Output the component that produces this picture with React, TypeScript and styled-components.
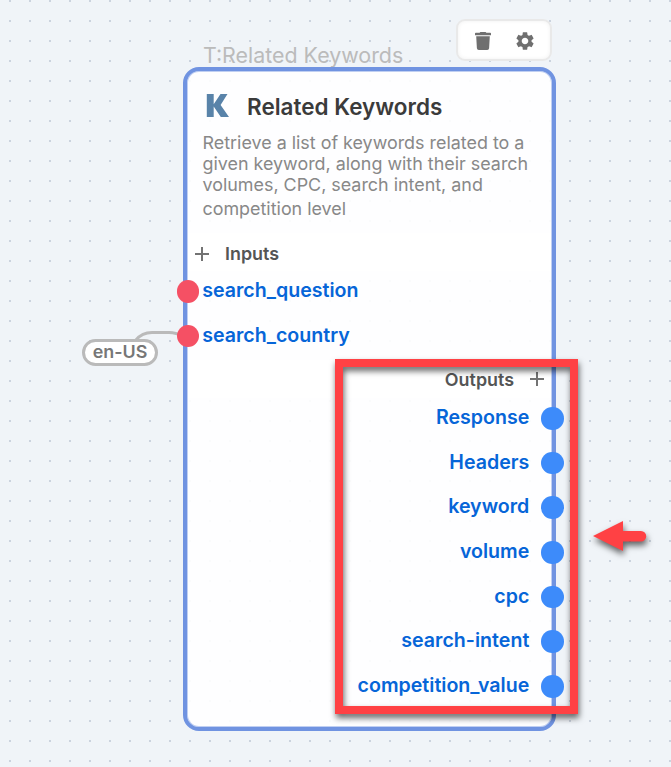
import React from "react";
import styled, { createGlobalStyle } from "styled-components";
import { MdSettings } from "react-icons/md";

const GlobalStyle = createGlobalStyle`
  * { box-sizing: border-box; }
  body { margin: 0; overflow: hidden; font-family: Inter, sans-serif; }
`;

const Canvas = styled.main`
  position: relative;
  width: 671px;
  height: 767px;
  overflow: hidden;
  background-color: #f0f4f8;
  background-image: conic-gradient(from 0deg at 2px 2px, transparent 0 75%, #cbd3de 75% 100%);
  background-size: 20px 20px;
  background-position: 9px 0;
`;

const NodeLabel = styled.div`
  position: absolute;
  left: 203px;
  top: 42px;
  font-size: 21.4px;
  line-height: 26px;
  color: #bbbbbb;
  white-space: nowrap;
`;

const Toolbar = styled.div`
  position: absolute;
  left: 456px;
  top: 19px;
  display: flex;
  align-items: center;
  gap: 22px;
  width: 96px;
  height: 42px;
  padding-left: 17px;
  border: 2px solid #e9e9e9;
  border-radius: 9px;
  background: #fff;
  box-shadow: inset 0 0 4px rgba(0, 0, 0, 0.06);
  color: #6f6f6f;
`;

const TrashIcon = styled.svg`
  width: 16px;
  height: 18px;
  margin-top: 2px;
  fill: currentColor;
`;

const GearIcon = styled(MdSettings)`
  width: 22px;
  height: 22px;
  margin: 2px 0 0 1px;
`;

const Node = styled.section`
  position: absolute;
  left: 183px;
  top: 67px;
  width: 373px;
  height: 664px;
  border: 4px solid #7093e1;
  border-radius: 16px;
  background: rgba(255, 255, 255, 0.9);
  background-clip: padding-box;
  box-shadow: inset 0 0 0 1px #c0cff2;
`;

const NodeHeader = styled.header`
  display: flex;
  align-items: center;
  gap: 17px;
  height: 62px;
  padding: 10px 0 0 19px;
`;

const Logo = styled.svg`
  width: 24px;
  height: 23px;
  margin-top: -3px;
  fill: #5983a9;
`;

const Title = styled.h1`
  margin: 0;
  font-size: 22.5px;
  line-height: 28px;
  font-weight: 640;
  color: #3b3b3b;
  white-space: nowrap;
`;

const Description = styled.p`
  height: 101px;
  margin: 0;
  padding-left: 15.5px;
  font-size: 17.9px;
  line-height: 21px;
  color: #888;
  white-space: nowrap;
`;

const Lines = styled.span`
  display: block;
  margin-top: -1px;
  padding-bottom: 1px;
`;

const Line = styled.span<{ $last?: boolean }>`
  display: block;
  margin-top: ${({ $last }) => ($last ? 3 : 0)}px;
`;

const Section = styled.div<{ $end?: boolean }>`
  display: flex;
  flex-direction: ${({ $end }) => ($end ? "row-reverse" : "row")};
  align-items: center;
  gap: 15px;
  height: 38px;
  margin: 0 1px;
  padding: ${({ $end }) => ($end ? "0 6px 0 0" : "3px 0 0 6px")};
  background: #fff;
  font-size: 17.9px;
  font-weight: 640;
  color: #555;
`;

const Plus = styled.svg`
  width: 16px;
  height: 16px;
  stroke: #737373;
  stroke-width: 2;
`;

const Ports = styled.div<{ $height: number }>`
  display: flex;
  flex-direction: column;
  height: ${({ $height }) => $height}px;
  margin-top: -2px;
`;

const Port = styled.div<{ $output?: boolean }>`
  display: flex;
  flex-direction: ${({ $output }) => ($output ? "row-reverse" : "row")};
  align-items: center;
  gap: ${({ $output }) => ($output ? 12 : 3)}px;
  height: 44.7px;
  margin: ${({ $output }) => ($output ? "0 -12px 0 0" : "0 0 0 -10.5px")};
`;

const Dot = styled.i<{ $output?: boolean }>`
  width: 22.7px;
  height: 22.7px;
  border-radius: 50%;
  background: ${({ $output }) => ($output ? "#3d8bfa" : "#f55064")};
`;

const PortName = styled.span`
  margin-top: -3px;
  font-size: 19.6px;
  line-height: 24px;
  font-weight: 640;
  color: #0665d8;
`;

const Wire = styled.svg`
  position: absolute;
  left: 130px;
  top: 325px;
  width: 54px;
  height: 22px;
  fill: none;
  stroke: #bababa;
  stroke-width: 3;
`;

const ValuePill = styled.div`
  position: absolute;
  left: 82px;
  top: 339px;
  width: 76px;
  height: 27px;
  border: 3px solid #bababa;
  border-radius: 14px;
  background: #fff;
  color: #777;
  font-size: 17.9px;
  line-height: 20px;
  font-weight: 640;
  text-align: center;
  white-space: nowrap;
`;

const Highlight = styled.div`
  position: absolute;
  left: 335px;
  top: 359px;
  width: 243px;
  height: 355px;
  border: 8px solid #ff4144;
  filter: drop-shadow(1px 4px 3px rgba(0, 0, 0, 0.6));
`;

const Arrow = styled.svg`
  position: absolute;
  left: 588px;
  top: 515px;
  width: 70px;
  height: 48px;
  fill: #ff4144;
  filter: drop-shadow(1px 4px 3px rgba(0, 0, 0, 0.6));
`;

const inputs = ["search_question", "search_country"];
const outputs = ["Response", "Headers", "keyword", "volume", "cpc", "search-intent", "competition_value"];

const PlusIcon = () => (
  <Plus viewBox="0 0 16 16"><path d="M8 1v14M1 8h14" /></Plus>
);

export default function App() {
  return (
    <Canvas>
      <GlobalStyle />
      <NodeLabel>T:Related Keywords</NodeLabel>
      <Toolbar>
        <TrashIcon viewBox="0 0 16 18">
          <path d="M0 1.600q0-.8.8-.8h3.800l.8-.8h5.200l.8.800h3.800q.8 0 .8.800v1.600H0zM1.200 4.200h13.600l-.7 12q-.1 1.800-1.900 1.800H3.800q-1.800 0-1.900-1.800z" />
        </TrashIcon>
        <GearIcon />
      </Toolbar>
      <Wire viewBox="130 325 54 22"><path d="M136 340c4-5 8-7.500 16-7.500h17c6 0 9 1 15 4" /></Wire>
      <ValuePill>en-US</ValuePill>
      <Node>
        <NodeHeader>
          <Logo viewBox="206 94 24 23"><path d="M206.800 94h6.900v10.200L220.500 94h7l-6.900 11 8.400 12h-8.200l-7.100-10.500V117h-6.900z" /></Logo>
          <Title>Related Keywords</Title>
        </NodeHeader>
        <Description>
          <Lines>
            <Line>Retrieve a list of keywords related to a</Line>
            <Line>given keyword, along with their search</Line>
            <Line>volumes, CPC, search intent, and</Line>
            <Line $last>competition level</Line>
          </Lines>
        </Description>
        <Section><PlusIcon /><span>Inputs</span></Section>
        <Ports $height={91}>
          {inputs.map((name) => (
            <Port key={name}><Dot /><PortName>{name}</PortName></Port>
          ))}
        </Ports>
        <Section $end><PlusIcon /><span>Outputs</span></Section>
        <Ports $height={328}>
          {outputs.map((name) => (
            <Port key={name} $output><Dot $output /><PortName>{name}</PortName></Port>
          ))}
        </Ports>
      </Node>
      <Highlight />
      <Arrow viewBox="588 515 70 48">
        <path d="M593 536l30-15v10h18a5 5 0 0 1 0 10.500h-18v9.500z" />
      </Arrow>
    </Canvas>
  );
}
